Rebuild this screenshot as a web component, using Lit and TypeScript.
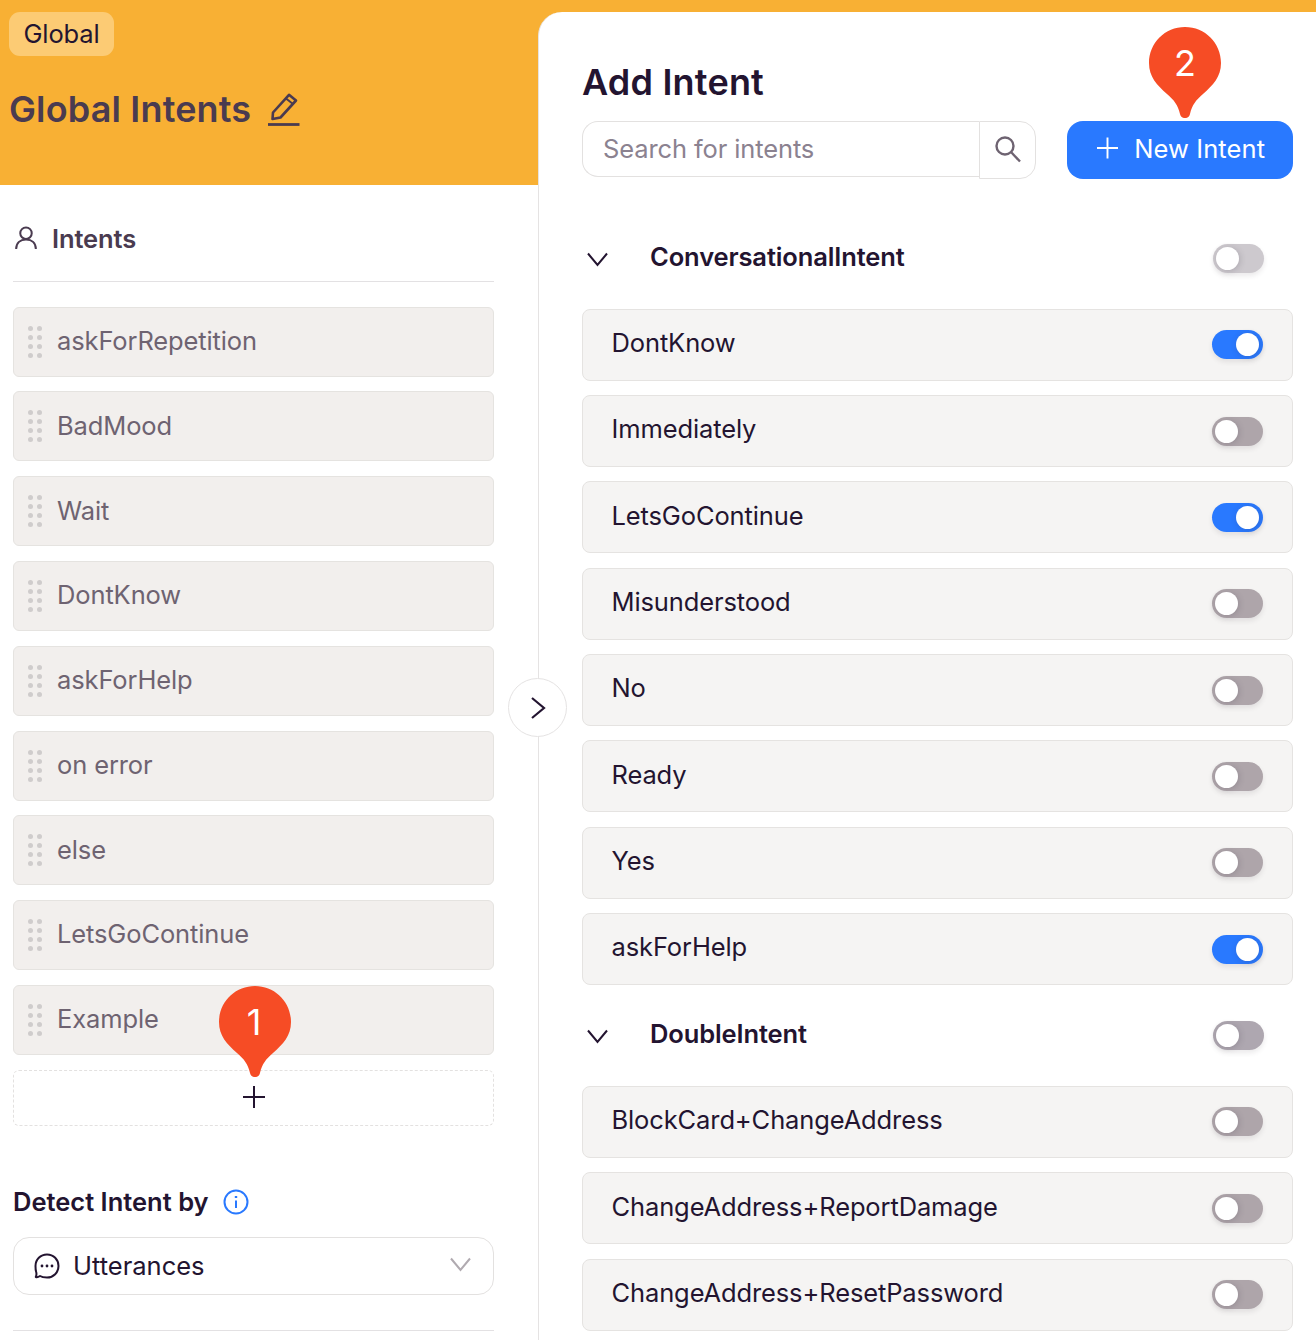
import { LitElement, html, css, svg } from "lit";
import { customElement } from "lit/decorators.js";

const LEFT = ["askForRepetition", "BadMood", "Wait", "DontKnow", "askForHelp", "on error", "else", "LetsGoContinue", "Example"];
const GROUPS: { title: string; light: boolean; items: [string, boolean][] }[] = [
  {
    title: "ConversationalIntent",
    light: true,
    items: [
      ["DontKnow", true],
      ["Immediately", false],
      ["LetsGoContinue", true],
      ["Misunderstood", false],
      ["No", false],
      ["Ready", false],
      ["Yes", false],
      ["askForHelp", true],
    ],
  },
  {
    title: "DoubleIntent",
    light: false,
    items: [
      ["BlockCard+ChangeAddress", false],
      ["ChangeAddress+ReportDamage", false],
      ["ChangeAddress+ResetPassword", false],
    ],
  },
];

const chevronDown = svg`<path d="M2 2.5 L11.5 14 L21 2.5" fill="none" stroke="currentColor" stroke-width="2"/>`;
const pinPath = "M36 0C56 0 72 16 72 36C72 50 64 58 54 67C47 73 43 78 41 87C40 92.5 32 92.5 31 87C29 78 25 73 18 67C8 58 0 50 0 36C0 16 16 0 36 0Z";

@customElement("app-root")
export class AppRoot extends LitElement {
  static styles = css`
    :host {
      display: block;
      width: 1316px;
      height: 1340px;
      overflow: hidden;
      background: #fff;
      font-family: Inter, "Liberation Sans", sans-serif;
      font-size: 25.5px;
      letter-spacing: -0.12px;
      color: #231430;
    }
    .page { position: relative; display: flex; width: 1316px; height: 1340px; }
    .left { width: 538px; flex: none; display: flex; flex-direction: column; }
    .banner {
      height: 185px;
      background: #f8b034;
      padding: 12px 0 0 9px;
      box-sizing: border-box;
      display: flex;
      flex-direction: column;
      align-items: flex-start;
    }
    .badge {
      height: 44px;
      width: 105px;
      background: #fccb74;
      border-radius: 11px;
      display: flex;
      align-items: center;
      justify-content: center;
      line-height: 1;
    }
    .banner-title {
      display: flex;
      align-items: center;
      margin: 31px 0 0 0;
      height: 44px;
      gap: 16px;
      font-size: 36px;
      font-weight: 600;
      color: #4a3b50;
      letter-spacing: 0.15px;
    }
    .pencil { width: 33px; height: 33px; display: block; color: #4a3b50; }
    .left-body { padding: 0 44px 0 13px; display: flex; flex-direction: column; }
    .intents-head {
      height: 97px;
      box-sizing: border-box;
      border-bottom: 1px solid #e3e1e3;
      display: flex;
      align-items: center;
      gap: 15px;
      padding: 10px 0 0 2px;
      font-weight: 600;
      color: #4a3b50;
    }
    .intents-head svg { width: 22px; height: 24px; display: block; }
    .left-list { display: flex; flex-direction: column; gap: 14.79px; margin-top: 24.7px; }
    .left-row {
      height: 70px;
      box-sizing: border-box;
      background: #f2efed;
      border: 1px solid #e5e3e0;
      border-radius: 6px;
      display: flex;
      align-items: center;
      gap: 15px;
      padding-left: 14px;
      color: #6e6371;
    }
    .left-row span { margin-top: -2.4px; }
    .dots { display: grid; grid-template-columns: 5px 5px; gap: 4px 4px; }
    .dots i { width: 5px; height: 5px; border-radius: 50%; background: #cfcccc; display: block; }
    .add-row {
      height: 56px;
      box-sizing: border-box;
      margin-top: 15px;
      border: 1px dashed #e3e1e0;
      border-radius: 6px;
      display: flex;
      align-items: center;
      justify-content: center;
    }
    .add-row svg { width: 22px; height: 22px; display: block; margin-top: -2px; }
    .detect {
      margin-top: 59px;
      height: 34px;
      display: flex;
      align-items: center;
      gap: 14px;
      font-weight: 600;
      letter-spacing: 0;
    }
    .detect span { margin-top: -1px; }
    .detect svg { width: 26px; height: 26px; display: block; }
    .select {
      margin-top: 18px;
      height: 58px;
      box-sizing: border-box;
      border: 1px solid #e3e1e0;
      border-radius: 16px;
      display: flex;
      align-items: center;
      padding: 0 21px 0 20px;
      gap: 13px;
      letter-spacing: 0;
    }
    .select .chat { width: 26px; height: 26px; display: block; }
    .select .grow { flex: 1; margin-top: -1px; }
    .select .chev { width: 23px; height: 17px; color: #b0aab0; display: block; margin-top: -2px; }
    .left-foot { margin-top: 35px; border-top: 1px solid #e3e1e3; }

    .right { flex: 1; background: #f8b034; padding-top: 12px; display: flex; min-width: 0; }
    .panel {
      flex: 1;
      background: #fff;
      border-left: 1px solid #e5e3e3;
      border-top-left-radius: 24px;
      padding: 0 23px 0 43px;
      display: flex;
      flex-direction: column;
      min-width: 0;
    }
    h1 {
      margin: 48px 0 0;
      height: 44px;
      line-height: 44px;
      font-size: 36px;
      font-weight: 600;
      letter-spacing: 0.2px;
    }
    .tools { display: flex; margin-top: 17px; height: 58px; align-items: flex-start; }
    .search-field {
      width: 398px;
      height: 56px;
      box-sizing: border-box;
      border: 1px solid #e3e1e0;
      border-right: none;
      border-radius: 16px 0 0 16px;
      display: flex;
      align-items: center;
      padding: 0 0 2px 20px;
      color: #8b8290;
    }
    .search-btn {
      width: 57px;
      height: 58px;
      box-sizing: border-box;
      border: 1px solid #e3e1e0;
      border-radius: 0 16px 16px 0;
      display: flex;
      align-items: center;
      justify-content: center;
      color: #6e6371;
    }
    .search-btn svg { width: 28px; height: 28px; display: block; margin-top: -3px; }
    .new-btn {
      margin-left: 31px;
      width: 226px;
      height: 58px;
      box-sizing: border-box;
      background: #2979ff;
      color: #fff;
      border-radius: 16px;
      display: flex;
      align-items: center;
      padding-left: 30px;
      gap: 16px;
      letter-spacing: 0.08px;
    }
    .new-btn svg { width: 21px; height: 22px; display: block; margin-top: -4px; }
    .new-btn span { margin-top: -4px; }
    .groups { margin-top: 64px; display: flex; flex-direction: column; }
    .group-head {
      height: 30px;
      display: flex;
      align-items: center;
      font-weight: 600;
      padding-right: 29px;
    }
    .group-head .chev { width: 23px; height: 17px; display: block; margin: 2px 0 0 4px; color: #231430; }
    .group-head .name { margin-left: 41px; flex: 1; margin-top: -3.5px; }
    .rows { display: flex; flex-direction: column; gap: 14.33px; margin: 35.8px 0 0; }
    .rows + .group-head { margin-top: 35px; }
    .row {
      height: 72px;
      box-sizing: border-box;
      background: #f5f4f3;
      border: 1px solid #e5e3e1;
      border-radius: 8px;
      display: flex;
      align-items: center;
      justify-content: space-between;
      padding: 0 29px 0 28.5px;
    }
    .row .label { margin-top: -4.4px; }
    .toggle {
      width: 51px;
      height: 29px;
      border-radius: 15px;
      background: #aea5aa;
      display: flex;
      align-items: center;
      padding: 0 3px;
      box-sizing: border-box;
      box-shadow: 0 3px 5px rgba(60, 50, 60, 0.1);
    }
    .toggle i {
      width: 23px;
      height: 23px;
      border-radius: 50%;
      background: #fff;
      display: block;
      box-shadow: 1px 1px 6px rgba(60, 50, 70, 0.22);
    }
    .toggle.on { background: #2979ff; justify-content: flex-end; padding-right: 4px; }
    .toggle.light { background: #cdc9ce; }
    .toggle.mid { background: #aea7b0; }

    .collapse {
      position: absolute;
      left: 508px;
      top: 678px;
      width: 59px;
      height: 59px;
      box-sizing: border-box;
      border: 1px solid #e5e3e3;
      border-radius: 50%;
      background: #fff;
      display: flex;
      align-items: center;
      justify-content: center;
    }
    .collapse svg { width: 16px; height: 24px; display: block; }
    .pin { position: absolute; width: 72px; height: 91px; }
    .pin svg { position: absolute; inset: 0; width: 72px; height: 91px; display: block; }
    .pin span {
      position: absolute;
      left: 0;
      right: 0;
      top: 14px;
      height: 44px;
      line-height: 44px;
      text-align: center;
      color: #fff;
      font-size: 36px;
    }
    .pin.p1 { left: 219px; top: 986px; }
    .pin.p1 span { left: -2px; }
    .pin.p2 { left: 1149px; top: 27px; }
  `;

  private pin(n: string, cls: string) {
    return html`<div class="pin ${cls}">
      <svg viewBox="0 0 72 91"><path d=${pinPath} fill="#f64c25" /></svg>
      <span>${n}</span>
    </div>`;
  }

  private toggle(cls: string) {
    return html`<div class="toggle ${cls}"><i></i></div>`;
  }

  render() {
    const plus = (c: string, w = 2) =>
      html`<svg viewBox="0 0 22 22"><path d="M11 0V22M0 11H22" stroke=${c} stroke-width=${w} fill="none" /></svg>`;
    return html`
      <div class="page">
        <div class="left">
          <div class="banner">
            <div class="badge">Global</div>
            <div class="banner-title">
              <span>Global Intents</span>
              <svg class="pencil" viewBox="0 0 33 33" fill="none" stroke="currentColor">
                <path d="M6 19.5 L22 1.8 L29 7.5 L13.5 24.5 L5.5 26 Z" stroke-width="2.6" stroke-linejoin="round" />
                <path d="M19 5.5 L26 11" stroke-width="2" />
                <path d="M1 31.5H32.5" stroke-width="2.8" />
              </svg>
            </div>
          </div>
          <div class="left-body">
            <div class="intents-head">
              <svg viewBox="0 0 23 24" fill="none" stroke="#4a3b50" stroke-width="2.1">
                <circle cx="11.5" cy="7" r="6" />
                <path d="M1.2 23.5C1.2 17 5.5 13.5 11.5 13.5S21.8 17 21.8 23.5" />
              </svg>
              <span>Intents</span>
            </div>
            <div class="left-list">
              ${LEFT.map(
                (t) => html`<div class="left-row">
                  <div class="dots">${Array.from({ length: 8 }, () => html`<i></i>`)}</div>
                  <span>${t}</span>
                </div>`
              )}
            </div>
            <div class="add-row">${plus("#231430")}</div>
            <div class="detect">
              <span>Detect Intent by</span>
              <svg viewBox="0 0 26 26" fill="none" stroke="#2979ff" stroke-width="2">
                <circle cx="13" cy="13" r="11.5" />
                <path d="M13 11.5V19" stroke-width="2" />
                <path d="M13 7V9" stroke-width="2.4" />
              </svg>
            </div>
            <div class="select">
              <svg class="chat" viewBox="0 0 26 26" fill="none" stroke="#231430" stroke-width="2">
                <path d="M13 1.5C19.5 1.5 24.5 6.5 24.5 13S19.5 24.5 13 24.5C10.5 24.5 7.5 24 6 23C4.5 24 3 24.5 1.8 24C2.5 22.5 2.7 21 2.2 19C1.6 17.5 1.5 15 1.5 13C1.5 6.5 6.5 1.5 13 1.5Z" stroke-linejoin="round" />
                <g fill="#231430" stroke="none">
                  <circle cx="8" cy="13" r="1.4" />
                  <circle cx="13" cy="13" r="1.4" />
                  <circle cx="18" cy="13" r="1.4" />
                </g>
              </svg>
              <span class="grow">Utterances</span>
              <svg class="chev" viewBox="0 0 23 17">${chevronDown}</svg>
            </div>
            <div class="left-foot"></div>
          </div>
        </div>
        <div class="right">
          <div class="panel">
            <h1>Add Intent</h1>
            <div class="tools">
              <div class="search-field">Search for intents</div>
              <div class="search-btn">
                <svg viewBox="0 0 28 28" fill="none" stroke="currentColor" stroke-width="2.4">
                  <circle cx="11" cy="11" r="8.5" />
                  <path d="M17 17L26 26.5" />
                </svg>
              </div>
              <div class="new-btn">${plus("#fff")}<span>New Intent</span></div>
            </div>
            <div class="groups">
              ${GROUPS.map(
                (g) => html`
                  <div class="group-head">
                    <svg class="chev" viewBox="0 0 23 17">${chevronDown}</svg>
                    <span class="name">${g.title}</span>
                    ${this.toggle(g.light ? "light" : "mid")}
                  </div>
                  <div class="rows">
                    ${g.items.map(
                      ([t, on]) => html`<div class="row">
                        <span class="label">${t}</span>
                        ${this.toggle(on ? "on" : "")}
                      </div>`
                    )}
                  </div>
                `
              )}
            </div>
          </div>
        </div>
        <div class="collapse">
          <svg viewBox="0 0 16 24" fill="none" stroke="#231430" stroke-width="2.2"><path d="M2 2L14 12L2 22" /></svg>
        </div>
        ${this.pin("1", "p1")} ${this.pin("2", "p2")}
      </div>
    `;
  }
}
